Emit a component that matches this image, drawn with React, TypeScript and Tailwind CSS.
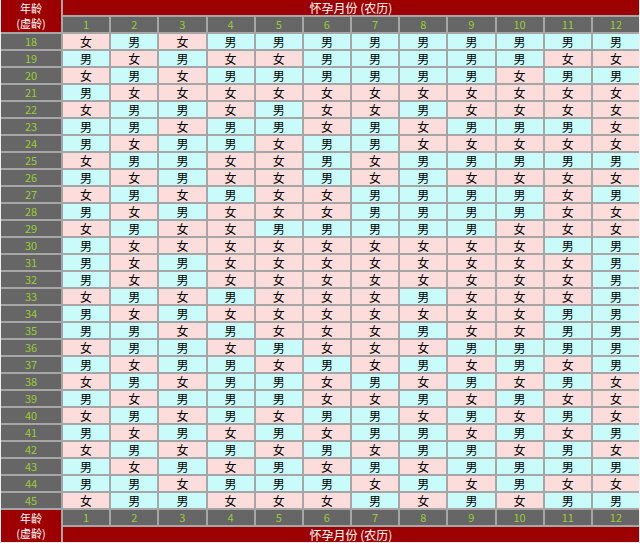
import React from 'react';

const rows: Record<number, string> = {
  18: '女男女男男男男男男男男男',
  19: '男女男女女男男男男男女女',
  20: '女男女男男男男男男女男男',
  21: '男女女女女女女女女女女女',
  22: '女男男女男女女男女女女女',
  23: '男男女男男女男女男男男女',
  24: '男女男男女男男女女女女女',
  25: '女男男女女男女男男男男男',
  26: '男女男女女男女男女女女女',
  27: '女男女男女女男男男男女男',
  28: '男女男女女女男男男男女女',
  29: '女男女女男男男男男女女女',
  30: '男女女女女女女女女女男男',
  31: '男女男女女女女女女女女男',
  32: '男女男女女女女女女女女男',
  33: '女男女男女女女男女女女男',
  34: '男女男女女女女女女女男男',
  35: '男男女男女女女男女女男男',
  36: '女男男女男女女女男男男男',
  37: '男女男男女男女男女男女男',
  38: '女男女男男女男女男女男女',
  39: '男女男男男女女男女男女女',
  40: '女男女男女男男女男女男女',
  41: '男女男女男女男男女男女男',
  42: '女男女男女男女男男女男女',
  43: '男女男女男女男女男男男男',
  44: '男男女男男男女男女男女女',
  45: '女男男女女女男女男女男男',
};

const months = Array.from({ length: 12 }, (_, i) => i + 1);
const ages = Object.keys(rows).map(Number);

const AgeHead = () => (
  <div className="row-span-2 bg-[#9c0000] text-white text-[11px] leading-[13px] flex flex-col items-center justify-center gap-[2px]">
    <span className="block h-[13px]">年龄</span>
    <span className="block h-[13px]">(虚龄)</span>
  </div>
);

const Title = () => (
  <div className="col-span-12 bg-[#9c0000] text-white text-[12px] leading-[15px] flex items-center justify-center">
    怀孕月份 (农历)
  </div>
);

const MonthCells = () => (
  <>
    {months.map((m) => (
      <div
        key={m}
        className="bg-[#666666] text-[#99cc33] text-[11px] leading-[15px] text-center"
      >
        {m}
      </div>
    ))}
  </>
);

const App: React.FC = () => {
  return (
    <div
      className="w-[640px] h-[543px] bg-[#f0f0f0] px-[1px] pb-[1px]"
      style={{ fontFamily: '"Noto Sans CJK SC", "Liberation Sans", sans-serif' }}
    >
      <div className="grid grid-cols-[60px_repeat(12,minmax(0,1fr))] auto-rows-[15px] gap-[2px] bg-[#a6a6a6]">
        <AgeHead />
        <Title />
        <MonthCells />

        {ages.map((age) => (
          <React.Fragment key={age}>
            <div className="bg-[#666666] text-[#99cc33] text-[11px] leading-[15px] text-center">
              {age}
            </div>
            {rows[age].split('').map((g, i) => (
              <div
                key={i}
                className={`text-[12px] leading-[15px] text-center text-black ${
                  g === '男' ? 'bg-[#c9fbfb]' : 'bg-[#fddcdc]'
                }`}
              >
                {g}
              </div>
            ))}
          </React.Fragment>
        ))}

        <AgeHead />
        <MonthCells />
        <Title />
      </div>
    </div>
  );
};

export default App;
